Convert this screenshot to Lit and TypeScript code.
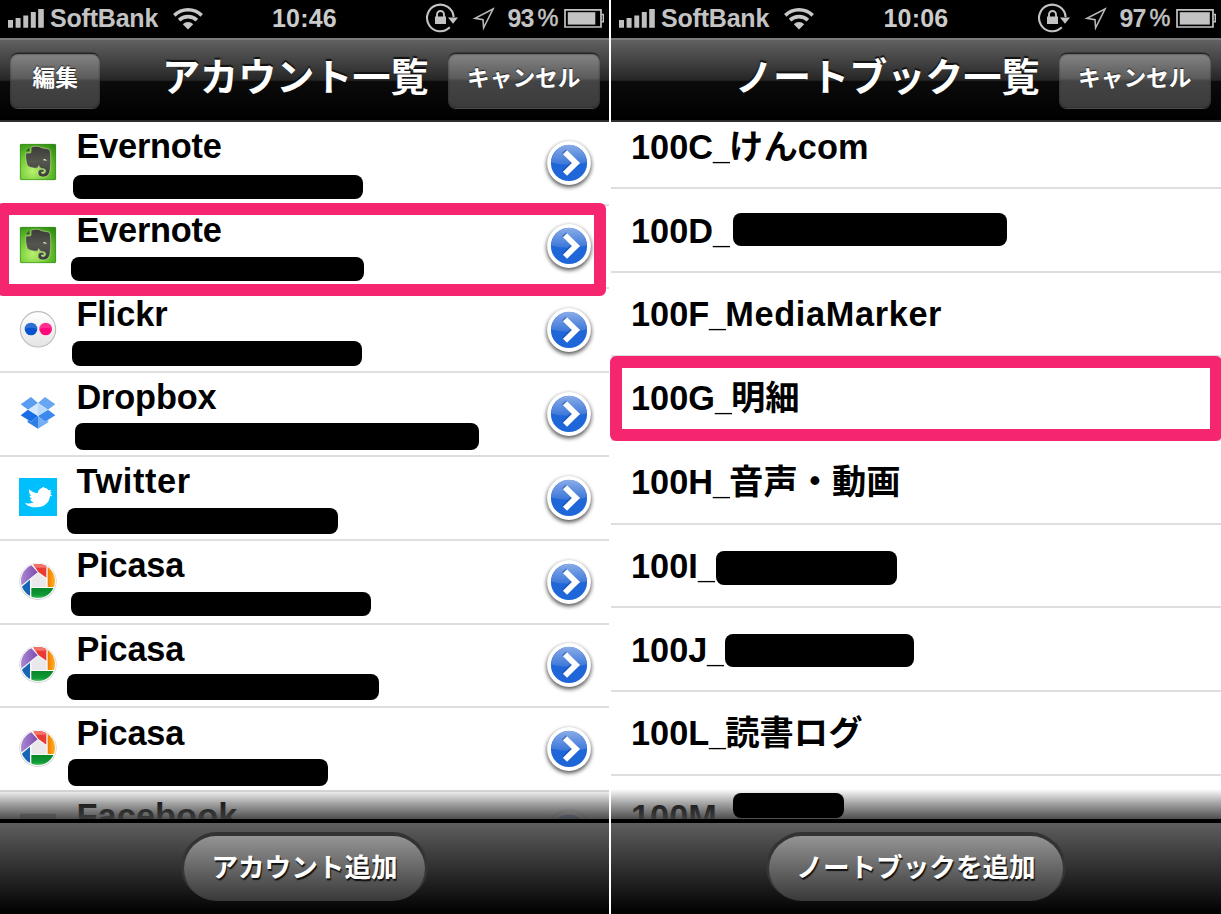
import { LitElement, html, svg, css, nothing } from "lit";
import { customElement, property } from "lit/decorators.js";
import { styleMap } from "lit/directives/style-map.js";

interface Mask { x: number; y: number; w: number; h: number }
interface Row { label: string; icon?: string; mask?: Mask; track?: number }

const px = (m: Mask) => styleMap({ left: `${m.x}px`, top: `${m.y}px`, width: `${m.w}px`, height: `${m.h}px` });

const accounts: Row[] = [
  { label: "Evernote", icon: "evernote", track: -0.2, mask: { x: 73, y: 53.2, w: 290, h: 24.3 } },
  { label: "Evernote", icon: "evernote", track: -0.2, mask: { x: 70.5, y: 52, w: 293, h: 23.5 } },
  { label: "Flickr", icon: "flickr", track: -0.1, mask: { x: 71.5, y: 51.5, w: 290.5, h: 25 } },
  { label: "Dropbox", icon: "dropbox", track: -0.15, mask: { x: 75, y: 50.5, w: 404, h: 27 } },
  { label: "Twitter", icon: "twitter", track: 0.6, mask: { x: 67, y: 51.6, w: 271, h: 26 } },
  { label: "Picasa", icon: "picasa", track: -0.2, mask: { x: 71, y: 52, w: 300, h: 23.5 } },
  { label: "Picasa", icon: "picasa", track: -0.2, mask: { x: 67, y: 50.1, w: 312, h: 25.5 } },
  { label: "Picasa", icon: "picasa", track: -0.2, mask: { x: 67.5, y: 51.3, w: 260.5, h: 26.5 } },
  { label: "Facebook", icon: "blank", track: 0.1 },
];

const notebooks: Row[] = [
  { label: "100C_けんcom", track: 0.1 },
  { label: "100D_", mask: { x: 121.5, y: 23.5, w: 274.5, h: 33 } },
  { label: "100F_MediaMarker", track: 0.65 },
  { label: "100G_明細" },
  { label: "100H_音声・動画" },
  { label: "100I_", mask: { x: 104.5, y: 27, w: 181, h: 33.5 } },
  { label: "100J_", mask: { x: 113.5, y: 26, w: 189.5, h: 33 } },
  { label: "100L_読書ログ" },
  { label: "100M_" },
];

const icons: Record<string, unknown> = {
  evernote: svg`
    <defs>
      <radialGradient id="g" cx=".35" cy=".75" r=".9"><stop offset="0" stop-color="#b9f070"/><stop offset=".45" stop-color="#72cc33"/><stop offset="1" stop-color="#2f8a12"/></radialGradient>
      <linearGradient id="e" x2="0" y2="1"><stop offset="0" stop-color="#3a3b38"/><stop offset=".5" stop-color="#55564f"/><stop offset="1" stop-color="#3c3d3a"/></linearGradient>
    </defs>
    <rect x="3" y="3" width="108" height="108" rx="4" fill="url(#g)"/>
    <rect x="4" y="4" width="106" height="106" rx="3" fill="none" stroke="#348f20" stroke-width="2"/>
    <path d="M36 13C42 9 62 8 67 14L90 18Q95 20 95 38Q97 60 93 84Q90 101 74 102Q57 102 57 91Q56 79 68 79H75V87H68Q66 90 70 92Q80 92 80 83Q80 77 69 77Q61 76 59 68Q58 78 44 75Q26 73 23 62Q18 45 20 30H32Q36 30 36 26Z" fill="url(#e)" stroke="#d5f79b" stroke-width="1.6"/>
    <path d="M21 25L31 14V25Z" fill="#41433f"/>
    <path d="M71 52Q78 43 84 54Q77 51 71 52Z" fill="#dff5b8"/>`,
  flickr: svg`
    <defs><linearGradient id="f" x2="0" y2="1"><stop offset="0" stop-color="#fff"/><stop offset="1" stop-color="#e4e4e4"/></linearGradient></defs>
    <circle cx="57" cy="58" r="53" fill="url(#f)" stroke="#bcbcbc" stroke-width="3.5"/>
    <circle cx="36" cy="57" r="19" fill="#0753cf"/><circle cx="80" cy="57" r="19" fill="#ff087b"/>
    <path d="M17 57A19 19 0 0 1 55 57Q36 50 17 57M61 57A19 19 0 0 1 99 57Q80 50 61 57" fill="#fff" opacity=".16"/>`,
  dropbox: svg`
    <path d="M36 9L57 27L27 47L5 31Z" fill="#5b9df0"/>
    <path d="M78 9L57 27L87 47L109 31Z" fill="#68a6f2"/>
    <path d="M27 47L57 66L36 83L5 64Z" fill="#176ee6"/>
    <path d="M87 47L57 66L78 83L109 64Z" fill="#3d88ec"/>
    <path d="M57 29L86 47L57 65L28 47Z" fill="#b9dafb"/>
    <path d="M57 29V65L28 47Z" fill="#d3e8fe"/>
    <path d="M57 66L36 83L26 78V85L57 104Z" fill="#2f80e6"/>
    <path d="M57 66L78 83L88 78V85L57 104Z" fill="#75aef4"/>`,
  twitter: svg`
    <path d="M0 0H114V114H0Z" fill="#00bffd"/>
    <path d="M30 34C38 41 46 45 56 46C57 38 61 33 67 31Q70 27 77 26L74 29Q84 28 89 37L97 36L93 43L98 43L94 49L100 54L93 55C91 74 76 88 52 88C36 88 24 84 18 74C28 78 38 77 44 73Q36 71 33 64L40 63Q33 60 31 53L37 54Q28 45 30 34Z" fill="#fff"/>`,
  picasa: svg`
    <defs>
      <clipPath id="c"><circle cx="57" cy="57" r="51"/></clipPath>
      <linearGradient id="o"><stop offset="0" stop-color="#f47a00"/><stop offset="1" stop-color="#ffc02b"/></linearGradient>
      <linearGradient id="p" x1="0" x2="1"><stop offset="0" stop-color="#b99add"/><stop offset="1" stop-color="#7b4cae"/></linearGradient>
      <linearGradient id="n" x2="0" y2="1"><stop offset="0" stop-color="#078727"/><stop offset=".6" stop-color="#109a38"/><stop offset="1" stop-color="#7bdc8a"/></linearGradient>
    </defs>
    <circle cx="57" cy="58" r="56" fill="#d2d2d4"/><circle cx="57" cy="57" r="54" fill="#fbfbfb"/>
    <g clip-path="url(#c)">
      <path d="M57 32L82 51V76H37V50Z" fill="#e9e9ec"/>
      <path d="M34 6L56 31L5 72L-10 40Z" fill="url(#p)"/>
      <path d="M38 0L58 30L82 47V0Z" fill="#e93a35"/><path d="M38 0H82V17H49Z" fill="#f3726a"/>
      <path d="M86 0H112V75H86Z" fill="url(#o)"/>
      <path d="M37 78H112V114H37Z" fill="url(#n)"/>
      <path d="M33 53V112H0L5 77Z" fill="#1766b6"/>
    </g>`,
  blank: svg`<rect x="2" y="2" width="110" height="110" rx="6" fill="#000" opacity=".4"/>`,
};

@customElement("status-bar")
class StatusBar extends LitElement {
  @property() time = "";
  @property() battery = "";
  @property({ type: Number }) level = 27;
  static styles = css`
    :host { display: grid; grid-template-columns: 1fr auto 1fr; height: 38px; background: #000; color: #c3c3c3;
      font: bold 25px/37px "Liberation Sans", Arial, sans-serif; }
    .left, .right { display: flex; align-items: flex-start; }
    .left { padding-left: 8px; }
    .right { justify-content: flex-end; padding-right: 5px; }
    svg { display: block; flex: none; height: 38px; }
    .carrier { margin-left: 6px; margin-right: 14px; letter-spacing: -.2px; }
    .time { color: #cbcbcb; letter-spacing: .2px; }
    .num { margin-left: 12.5px; width: 30px; letter-spacing: -.9px; }
    .pct { margin-right: 5.5px; font-weight: normal; font-size: 23.5px; -webkit-text-stroke: .5px; }
  `;
  render() {
    return html`
      <div class="left">
        <svg width="36" viewBox="0 0 36 38" fill="#bfbfbf"><path d="M0 20H5V27.8H0ZM7.6 18H12.6V27.8H7.6ZM15.3 15.5H20.2V27.8H15.3ZM22.8 12H27.8V27.8H22.8ZM30.2 9H35.8V27.8H30.2Z"/></svg>
        <span class="carrier">SoftBank</span>
        <svg width="32" viewBox="0 0 32 38" fill="none" stroke="#c8c8c8" stroke-width="3.6">
          <path d="M2.3 15.4A19.5 19.5 0 0 1 29.7 15.4M7.1 20.1A13 13 0 0 1 24.9 20.1"/>
          <path d="M16 29.5L10.8 24.2A7.5 7.5 0 0 1 21.2 24.2Z" fill="#c8c8c8" stroke="none"/>
        </svg>
      </div>
      <span class="time">${this.time}</span>
      <div class="right">
        <svg width="34" viewBox="0 0 34 38">
          <path d="M24.8 27.3A13.3 13.3 0 1 1 28.6 17" fill="none" stroke="#c3c3c3" stroke-width="2.1"/>
          <path d="M23 17.5H33L28 23.8Z" fill="#c3c3c3"/>
          <path d="M10 16.5H21V24H10Z" fill="#c3c3c3"/>
          <path d="M12 17V14.5A3.5 3.5 0 0 1 19 14.5V17" fill="none" stroke="#c3c3c3" stroke-width="1.9"/>
        </svg>
        <svg width="36" viewBox="0 0 36 38" fill="none" stroke="#b5b5b5" stroke-width="1.6"><path d="M34 9L16 18.4L24 19.6L24.6 27.8Z"/></svg>
        <span class="num">${this.battery}</span><span class="pct">%</span>
        <svg width="40" viewBox="0 0 40 38"><path d="M1 9.8H37V27H1Z" fill="none" stroke="#c3c3c3" stroke-width="1.7"/><path d="M37.5 14.5H39.3V21.8H37.5" fill="none" stroke="#c3c3c3" stroke-width="1.4"/><rect x="3.8" y="12.2" width=${this.level} height="12.4" fill="#c3c3c3"/></svg>
      </div>`;
  }
}

@customElement("list-row")
class ListRow extends LitElement {
  @property({ attribute: false }) row!: Row;
  static styles = css`
    :host { display: block; position: relative; box-sizing: border-box; height: 83.8px; border-bottom: 2px solid #dedede; overflow: hidden; }
    .body { display: flex; align-items: flex-start; padding: 21.2px 0 0 20px; }
    .account { padding: 4.2px 18px 0 19px; }
    .label { flex: 1; font: bold 34.3px/40px "Liberation Sans", Arial, "Noto Sans CJK JP", sans-serif; color: #000; white-space: nowrap; }
    .under { display: inline-block; letter-spacing: 0; transform: scaleX(.88); transform-origin: 0 0; margin-right: -3px; }
    .account .label { margin-left: 19.5px; }
    .icon { width: 38px; height: 38px; margin-top: 16.6px; }
    .more { width: 52px; height: 58px; margin: 7.7px -4px 0 0; }
    .mask { position: absolute; margin-top: -.3px; background: #000; border-radius: 8px; }
  `;
  render() {
    const { label, icon, mask, track = 0 } = this.row;
    const [head, tail] = label.split("_");
    return html`
      <div class="body ${icon ? "account" : ""}">
        ${icon ? html`<svg class="icon" viewBox="0 0 114 114">${icons[icon]}</svg>` : nothing}
        <span class="label">${tail === undefined
          ? html`<span style=${styleMap({ letterSpacing: `${track}px` })}>${head}</span>`
          : html`${head}<span class="under">_</span><span style=${styleMap({ letterSpacing: `${track}px` })}>${tail}</span>`}</span>
        ${icon ? html`
          <svg class="more" viewBox="0 0 52 58">
            <defs>
              <linearGradient id="top" x2="0" y2="1"><stop offset="0" stop-color="#8aace8"/><stop offset="1" stop-color="#3b76d9"/></linearGradient>
              <filter id="s" x="-30%" y="-30%" width="160%" height="160%"><feGaussianBlur stdDeviation="1.9"/></filter>
            </defs>
            <circle cx="26" cy="31" r="22.3" fill="#000" opacity=".68" filter="url(#s)"/>
            <circle cx="26" cy="29" r="21.9" fill="#fff"/>
            <circle cx="26" cy="29" r="18.1" fill="#1f66d8"/>
            <path d="M8.2 28.5A17.8 17.8 0 0 1 43.8 28.5Q26 33 8.2 28.5Z" fill="url(#top)"/>
            <path d="M22 18.5L32.6 29L22 39.5" fill="none" stroke="#174aa5" stroke-width="5.4" transform="translate(-1 -1.2)" opacity=".6"/>
            <path d="M22 18.3L32.9 29L22 39.7" fill="none" stroke="#fff" stroke-width="5.8"/>
          </svg>` : nothing}
      </div>
      ${mask ? html`<div class="mask" style=${px(mask)}></div>` : nothing}`;
  }
}

@customElement("phone-screen")
class PhoneScreen extends LitElement {
  @property() time = "";
  @property() battery = "";
  @property({ type: Number }) level = 27;
  @property() heading = "";
  @property() edit = "";
  @property() action = "";
  @property({ type: Number }) scroll = 0;
  @property({ attribute: false }) rows: Row[] = [];
  @property({ attribute: false }) frame!: Mask;
  @property({ attribute: false }) overlay?: Mask;
  static styles = css`
    :host { display: flex; flex-direction: column; position: relative; height: 914px; background: #fff; font-family: "Noto Sans CJK JP", sans-serif; }
    .nav { flex: none; box-sizing: border-box; height: 83.8px; display: flex; align-items: flex-start; padding: 14px 9px 0 10px; border-top: 2px solid #7b7b7b; border-bottom: 2px solid #2f2f2f;
      background: linear-gradient(#616161 0, #262626 50.5%, #0b0b0b 51%, #000 100%); }
    .plain { padding-right: 10px; }
    .btn { box-sizing: border-box; height: 54.5px; padding: 0 19.5px; margin-top: -.5px; border-radius: 8px; color: #fff; font-weight: 700; font-size: 22.7px; line-height: 46px;
      background: linear-gradient(#848484 0, #5b5b5b 45%, #444 50%, #3b3b3b 100%); box-shadow: 0 -1.5px 0 #252525, 0 1px 0 #4a4a4a, inset 0 0 2px #222; text-shadow: 0 -1px 1px #222; white-space: nowrap; }
    .edit { padding: 0 22.5px; }
    .title { margin-left: auto; margin-right: 19px; color: #fff; font-weight: 700; font-size: 38.1px; line-height: 41px; text-shadow: 0 -2px 1px #111; white-space: nowrap; }
    .list { position: relative; flex: 1; min-height: 0; overflow: hidden; }
    .fade { position: absolute; inset: auto 0 0 0; height: 30px; background: linear-gradient(rgba(62,62,62,0), rgba(65,65,65,.5) 50%, rgba(65,65,65,.93)); }
    .foot { flex: none; box-sizing: border-box; height: 95.5px; border-top: 4px solid #000; display: flex; justify-content: center; padding-top: 13.5px;
      background: linear-gradient(#5e5e5e, #000); }
    .pill { height: 65px; padding: 0 27.2px; border-radius: 33px; color: #fff; font-weight: 700; font-size: 26.6px; line-height: 60px; white-space: nowrap;
      background: linear-gradient(#949494, #383838); box-shadow: 0 -4px 0 #333, -3px -2px 0 #363636, 3px -2px 0 #363636; text-shadow: 1px 2px 1px #111; }
    .frame { position: absolute; box-sizing: border-box; border: 12px solid #f5266f; border-radius: 6px; }
    .mask { position: absolute; background: #000; border-radius: 8px; }
  `;
  render() {
    return html`
      <status-bar .time=${this.time} .battery=${this.battery} .level=${this.level}></status-bar>
      <div class="nav ${this.edit ? "" : "plain"}">
        ${this.edit ? html`<div class="btn edit">${this.edit}</div>` : nothing}
        <div class="title">${this.heading}</div>
        <div class="btn">キャンセル</div>
      </div>
      <div class="list">
        <div style=${styleMap({ marginTop: `${-this.scroll}px` })}>${this.rows.map((r) => html`<list-row .row=${r}></list-row>`)}</div>
        <div class="fade"></div>
      </div>
      <div class="foot"><div class="pill">${this.action}</div></div>
      <div class="frame" style=${px(this.frame)}></div>
      ${this.overlay ? html`<div class="mask" style=${px(this.overlay)}></div>` : nothing}`;
  }
}

@customElement("app-root")
class AppRoot extends LitElement {
  static styles = css`
    :host { display: grid; grid-template-columns: 609px 610px; column-gap: 2px; width: 1221px; height: 914px; overflow: hidden; background: #fff; }
  `;
  render() {
    return html`
      <phone-screen time="10:46" battery="93" level="27.5" heading="アカウント一覧" edit="編集" action="アカウント追加"
        .rows=${accounts} .frame=${{ x: -3, y: 203, w: 609, h: 92.6 }}></phone-screen>
      <phone-screen time="10:06" battery="97" level="30" heading="ノートブック一覧" action="ノートブックを追加" scroll="16.2"
        .rows=${notebooks} .frame=${{ x: -1, y: 355.6, w: 612, h: 85.6 }} .overlay=${{ x: 121.5, y: 793.3, w: 111.5, h: 24.3 }}></phone-screen>`;
  }
}
